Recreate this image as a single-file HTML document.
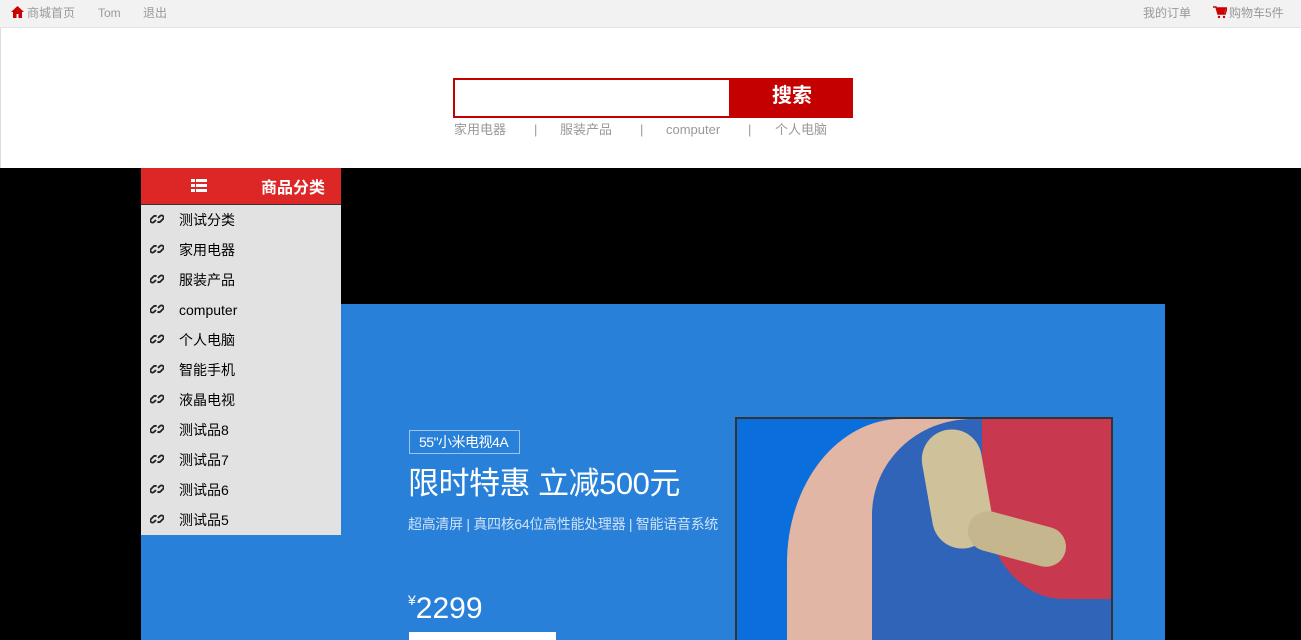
<!DOCTYPE html>
<html><head><meta charset="utf-8"><style>
*{margin:0;padding:0;box-sizing:border-box}
body{width:1301px;height:640px;overflow:hidden;background:#fff;font-family:"Liberation Sans","Noto Sans CJK SC",sans-serif;font-size:12px;position:relative}
.top{position:absolute;left:0;top:0;width:1301px;height:28px;background:#f2f2f2;border-bottom:1px solid #e3e3e3;color:#999}
.top span{position:absolute;top:5px;line-height:16px}
.hdr{position:absolute;left:0;top:28px;width:1301px;height:140px;border-left:1px solid #ddd}
.sbox{position:absolute;left:453px;top:78px;width:278px;height:40px;border:2px solid #c40000;background:#fff}
.sbtn{position:absolute;left:731px;top:78px;width:122px;height:40px;background:#c40000;color:#fff;font-size:20px;font-weight:bold;text-align:center;line-height:36px}
.hot{position:absolute;top:121px;font-size:13px;color:#999;line-height:18px}
.black{position:absolute;left:0;top:168px;width:1301px;height:472px;background:#000}
.ban{position:absolute;left:141px;top:304px;width:1024px;height:336px;background:#2880d9;overflow:hidden}
.menu{position:absolute;left:141px;top:168px;width:200px;height:367px;background:#e2e2e2}
.mh{height:37px;background:#dd2727;color:#fff;font-size:16px;font-weight:bold;position:relative;border-bottom:1px solid #333}
.mi{height:30px;line-height:30px;font-size:14px;color:#000;position:relative;padding-left:38px}
.mi svg{position:absolute;left:9px;top:7px}
.w{color:#fff;position:absolute;white-space:nowrap}
</style></head><body>
<div class="top">
<svg style="position:absolute;left:11px;top:6px" width="13" height="12" viewBox="0 0 13 12"><path d="M6.5 0L0 6h2v6h3.5V8h2v4H11V6h2z" fill="#c00"/></svg>
<span style="left:27px">商城首页</span><span style="left:98px">Tom</span><span style="left:143px">退出</span>
<span style="left:1143px">我的订单</span>
<svg style="position:absolute;left:1213px;top:6px" width="14" height="13" viewBox="0 0 14 13"><path d="M0 1h3l2 7h7l2-6H4" fill="none" stroke="#c00" stroke-width="1.5"/><path d="M4 2h9l-2 6H5z" fill="#c00"/><circle cx="6" cy="11" r="1.2" fill="#c00"/><circle cx="11" cy="11" r="1.2" fill="#c00"/></svg>
<span style="left:1229px">购物车5件</span>
</div>
<div class="hdr"></div>
<div class="sbox"></div><div class="sbtn">搜索</div>
<span class="hot" style="left:454px">家用电器</span><span class="hot" style="left:534px">|</span>
<span class="hot" style="left:560px">服装产品</span><span class="hot" style="left:640px">|</span>
<span class="hot" style="left:666px">computer</span><span class="hot" style="left:748px">|</span>
<span class="hot" style="left:775px">个人电脑</span>
<div class="black"></div>
<div class="ban">
<div style="position:absolute;left:268px;top:126px;width:111px;height:24px;border:1px solid #9cc4ee;color:#fff;font-size:14px;line-height:22px;padding-left:9px;white-space:nowrap;letter-spacing:-0.5px">55"小米电视4A</div>
<div class="w" style="left:267px;top:160px;font-size:31px;line-height:40px;letter-spacing:-0.5px">限时特惠 立减500元</div>
<div class="w" style="left:267px;top:210px;font-size:14px;color:#cfe2f7;letter-spacing:-0.3px">超高清屏 | 真四核64位高性能处理器 | 智能语音系统</div>
<div class="w" style="left:267px;top:288px;font-size:30px"><span style="font-size:14px;vertical-align:top">¥</span>2299</div>
<div style="position:absolute;left:268px;top:328px;width:147px;height:10px;background:#fff"></div>
<div style="position:absolute;left:594px;top:113px;width:378px;height:240px;border:2px solid #333;background:#0a6fdc;overflow:hidden">
<div style="position:absolute;left:50px;top:0;width:190px;height:240px;background:#e2b6a4;border-radius:60% 0 0 0"></div>
<div style="position:absolute;left:135px;top:0;width:250px;height:240px;background:#2f64b8;border-radius:40% 0 0 0"></div>
<div style="position:absolute;left:245px;top:0;width:135px;height:180px;background:#c8394f;border-radius:0 0 0 60%"></div>
<div style="position:absolute;left:190px;top:10px;width:60px;height:120px;background:#cfc19a;border-radius:30px;transform:rotate(-10deg)"></div>
<div style="position:absolute;left:230px;top:100px;width:100px;height:40px;background:#c5b68e;border-radius:20px;transform:rotate(15deg)"></div>
</div>
</div>
<div class="menu">
<div class="mh"><svg style="position:absolute;left:50px;top:11px" width="16" height="13" viewBox="0 0 16 13"><path d="M0 0h4v3H0zM5 0h11v3H5zM0 5h4v3H0zM5 5h11v3H5zM0 10h4v3H0zM5 10h11v3H5z" fill="#fff"/></svg><span style="position:absolute;left:120px;top:6px">商品分类</span></div>
<div class="mi"><svg width="14" height="14" viewBox="0 0 14 14"><path d="M6 8l-2 2a2 2 0 01-3-3l2.5-2.5a2 2 0 013 0M8 6l2-2a2 2 0 013 3l-2.5 2.5a2 2 0 01-3 0" fill="none" stroke="#222" stroke-width="1.8"/></svg>测试分类</div>
<div class="mi"><svg width="14" height="14" viewBox="0 0 14 14"><path d="M6 8l-2 2a2 2 0 01-3-3l2.5-2.5a2 2 0 013 0M8 6l2-2a2 2 0 013 3l-2.5 2.5a2 2 0 01-3 0" fill="none" stroke="#222" stroke-width="1.8"/></svg>家用电器</div>
<div class="mi"><svg width="14" height="14" viewBox="0 0 14 14"><path d="M6 8l-2 2a2 2 0 01-3-3l2.5-2.5a2 2 0 013 0M8 6l2-2a2 2 0 013 3l-2.5 2.5a2 2 0 01-3 0" fill="none" stroke="#222" stroke-width="1.8"/></svg>服装产品</div>
<div class="mi"><svg width="14" height="14" viewBox="0 0 14 14"><path d="M6 8l-2 2a2 2 0 01-3-3l2.5-2.5a2 2 0 013 0M8 6l2-2a2 2 0 013 3l-2.5 2.5a2 2 0 01-3 0" fill="none" stroke="#222" stroke-width="1.8"/></svg>computer</div>
<div class="mi"><svg width="14" height="14" viewBox="0 0 14 14"><path d="M6 8l-2 2a2 2 0 01-3-3l2.5-2.5a2 2 0 013 0M8 6l2-2a2 2 0 013 3l-2.5 2.5a2 2 0 01-3 0" fill="none" stroke="#222" stroke-width="1.8"/></svg>个人电脑</div>
<div class="mi"><svg width="14" height="14" viewBox="0 0 14 14"><path d="M6 8l-2 2a2 2 0 01-3-3l2.5-2.5a2 2 0 013 0M8 6l2-2a2 2 0 013 3l-2.5 2.5a2 2 0 01-3 0" fill="none" stroke="#222" stroke-width="1.8"/></svg>智能手机</div>
<div class="mi"><svg width="14" height="14" viewBox="0 0 14 14"><path d="M6 8l-2 2a2 2 0 01-3-3l2.5-2.5a2 2 0 013 0M8 6l2-2a2 2 0 013 3l-2.5 2.5a2 2 0 01-3 0" fill="none" stroke="#222" stroke-width="1.8"/></svg>液晶电视</div>
<div class="mi"><svg width="14" height="14" viewBox="0 0 14 14"><path d="M6 8l-2 2a2 2 0 01-3-3l2.5-2.5a2 2 0 013 0M8 6l2-2a2 2 0 013 3l-2.5 2.5a2 2 0 01-3 0" fill="none" stroke="#222" stroke-width="1.8"/></svg>测试品8</div>
<div class="mi"><svg width="14" height="14" viewBox="0 0 14 14"><path d="M6 8l-2 2a2 2 0 01-3-3l2.5-2.5a2 2 0 013 0M8 6l2-2a2 2 0 013 3l-2.5 2.5a2 2 0 01-3 0" fill="none" stroke="#222" stroke-width="1.8"/></svg>测试品7</div>
<div class="mi"><svg width="14" height="14" viewBox="0 0 14 14"><path d="M6 8l-2 2a2 2 0 01-3-3l2.5-2.5a2 2 0 013 0M8 6l2-2a2 2 0 013 3l-2.5 2.5a2 2 0 01-3 0" fill="none" stroke="#222" stroke-width="1.8"/></svg>测试品6</div>
<div class="mi"><svg width="14" height="14" viewBox="0 0 14 14"><path d="M6 8l-2 2a2 2 0 01-3-3l2.5-2.5a2 2 0 013 0M8 6l2-2a2 2 0 013 3l-2.5 2.5a2 2 0 01-3 0" fill="none" stroke="#222" stroke-width="1.8"/></svg>测试品5</div>
</div>
</body></html>
